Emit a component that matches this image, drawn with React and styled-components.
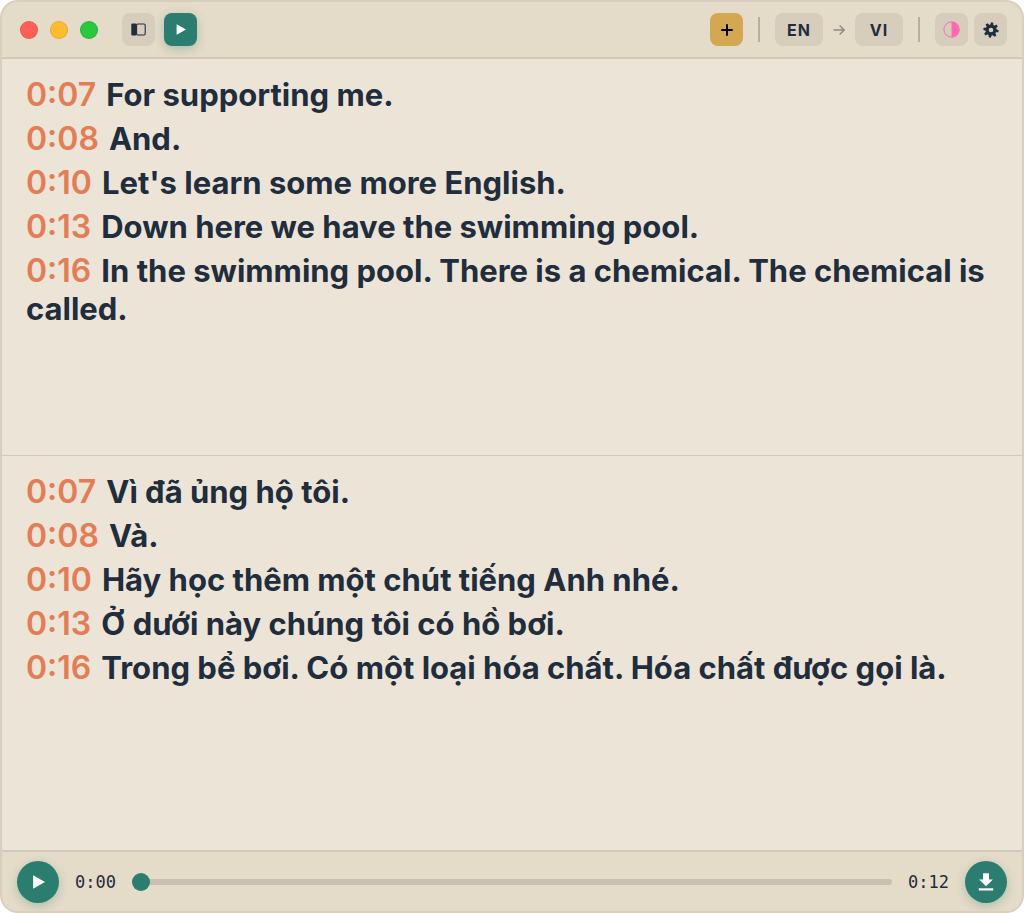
import React, { useState } from 'react';
import styled, { createGlobalStyle, css } from 'styled-components';

const color = {
  ink: '#1f2d3d',
  green: '#2a7d6f',
  amber: '#d4a853',
  coral: '#e27d55',
  bar: '#e4dbc8',
  paper: '#ece4d7',
  chip: '#d6cdbd',
  line: '#d3c9b8',
};

const GlobalStyle = createGlobalStyle`
  *, *::before, *::after { box-sizing: border-box; }
  body { margin: 0; background: #ffffff; }
  button, input { font: inherit; margin: 0; }
`;

const Window = styled.div`
  display: grid;
  grid-template-rows: auto 1fr 1fr auto;
  min-height: 100vh;
  overflow: hidden;
  border: 2px solid #d8cebe;
  border-radius: 18px;
  background: ${color.paper};
  color: ${color.ink};
  font-family: Inter, "Liberation Sans", sans-serif;
`;

const Toolbar = styled.header`
  display: flex;
  align-items: center;
  justify-content: space-between;
  padding: 11px 15px 11px 18px;
  border-bottom: 2px solid ${color.line};
  background: ${color.bar};
`;

const Group = styled.div`
  display: flex;
  align-items: center;
  gap: ${(p) => p.$gap}px;
`;

const TrafficLights = styled(Group)`
  margin-right: 15px;
`;

const Light = styled.button`
  width: 18px;
  height: 18px;
  padding: 0;
  border: 1px solid rgba(0, 0, 0, 0.1);
  border-radius: 50%;
  background: ${(p) => p.$color};
`;

const tones = {
  plain: css`
    background: ${color.chip};
    color: ${color.ink};
  `,
  green: css`
    background: ${color.green};
    color: #ffffff;
    box-shadow: 0 3px 10px rgba(42, 125, 111, 0.3);
  `,
  amber: css`
    background: ${color.amber};
    color: #000000;
  `,
};

const ToolButton = styled.button`
  display: flex;
  align-items: center;
  justify-content: center;
  width: ${(p) => (p.$wide ? 48 : 33)}px;
  height: 33px;
  padding: 0;
  border: 0;
  border-radius: 8px;
  font-size: 16px;
  font-weight: 700;
  letter-spacing: 1px;
  ${(p) => tones[p.$tone || 'plain']}
`;

const Separator = styled.span`
  width: 2px;
  height: 25px;
  background: #b7aea3;
`;

const Panel = styled.section`
  padding: 17px 24px;

  & + & {
    border-top: 1px solid ${color.line};
  }
`;

const Line = styled.p`
  margin: 0 0 6px;
  font-size: 31px;
  line-height: 38px;
  font-weight: 700;
`;

const Stamp = styled.time`
  margin-right: 10px;
  color: ${color.coral};
  font-size: 32px;
  line-height: 32px;
  font-weight: 600;
`;

const Player = styled.footer`
  display: flex;
  align-items: center;
  gap: 16px;
  padding: 9px 15px 8px;
  border-top: 2px solid ${color.line};
  background: ${color.bar};
`;

const RoundButton = styled.button`
  display: flex;
  flex: none;
  align-items: center;
  justify-content: center;
  width: 42px;
  height: 42px;
  padding: 0;
  border: 0;
  border-radius: 50%;
  ${tones.green}
`;

const Clock = styled.span`
  font-family: "DejaVu Sans Mono", monospace;
  font-size: 17px;
  line-height: 20px;
`;

const Seek = styled.input`
  flex: 1;
  min-width: 0;
  height: 18px;
  appearance: none;
  background: transparent;

  &::-webkit-slider-runnable-track {
    height: 6px;
    border-radius: 3px;
    background: #c8c0b0;
  }

  &::-webkit-slider-thumb {
    appearance: none;
    width: 18px;
    height: 18px;
    margin-top: -6px;
    border-radius: 50%;
    background: ${color.green};
  }
`;

const SidebarIcon = () => (
  <svg width="15" height="13" viewBox="0 0 15 13" aria-hidden="true">
    <rect x="0.3" y="0.5" width="5.2" height="12" rx="1" fill="currentColor" />
    <rect x="5.6" y="1" width="8.6" height="11" rx="1.2" fill="none" stroke="currentColor" strokeWidth="1.1" />
  </svg>
);

const PlayIcon = ({ size }) => (
  <svg width={size} height={size} viewBox="0 0 12 12" aria-hidden="true">
    <path d="M1.8 0.3 12 6 1.8 11.7Z" fill="currentColor" />
  </svg>
);

const PlusIcon = () => (
  <svg width="12" height="12" viewBox="0 0 12 12" aria-hidden="true">
    <path d="M6 0.3v11.4M0.3 6h11.4" stroke="currentColor" strokeWidth="2" />
  </svg>
);

const ArrowIcon = () => (
  <svg width="12" height="10" viewBox="0 0 12 10" fill="none" stroke="#8d8b84" strokeWidth="1.4" aria-hidden="true">
    <path d="M0.5 5h10.5M6.6 0.6 11.2 5 6.6 9.4" />
  </svg>
);

const ContrastIcon = () => (
  <svg width="17" height="17" viewBox="0 0 17 17" aria-hidden="true">
    <circle cx="8.5" cy="8.5" r="7.6" fill="none" stroke="#ff69b4" strokeWidth="1" />
    <path d="M8.5 0.4a8.1 8.1 0 0 1 0 16.2Z" fill="#ff69b4" />
  </svg>
);

const GearIcon = () => (
  <svg width="16" height="16" viewBox="-8 -8 16 16" aria-hidden="true">
    <circle r="3.9" fill="none" stroke="currentColor" strokeWidth="3.2" />
    {[10, 55, 100, 145, 190, 235, 280, 325].map((a) => (
      <path key={a} d="M-1.6 -4.6-1.3 -7.6H1L1.6 -4.6Z" transform={`rotate(${a})`} fill="currentColor" />
    ))}
  </svg>
);

const DownloadIcon = () => (
  <svg width="16" height="18" viewBox="0 0 16 18" fill="currentColor" aria-hidden="true">
    <path d="M5 0.3h6v6.2h3.9L8 13.3 1.1 6.5H5Z" />
    <rect x="0.8" y="15.3" width="14.4" height="2.2" />
  </svg>
);

const english = [
  ['0:07', 'For supporting me.'],
  ['0:08', 'And.'],
  ['0:10', "Let's learn some more English."],
  ['0:13', 'Down here we have the swimming pool.'],
  ['0:16', 'In the swimming pool. There is a chemical. The chemical is called.'],
];

const vietnamese = [
  ['0:07', 'Vì đã ủng hộ tôi.'],
  ['0:08', 'Và.'],
  ['0:10', 'Hãy học thêm một chút tiếng Anh nhé.'],
  ['0:13', 'Ở dưới này chúng tôi có hồ bơi.'],
  ['0:16', 'Trong bể bơi. Có một loại hóa chất. Hóa chất được gọi là.'],
];

const Transcript = ({ lang, label, lines }) => (
  <Panel lang={lang} aria-label={label}>
    {lines.map(([time, text]) => (
      <Line key={time}>
        <Stamp>{time}</Stamp>
        {text}
      </Line>
    ))}
  </Panel>
);

export default function App() {
  const [position, setPosition] = useState(0);
  return (
    <>
      <GlobalStyle />
      <Window>
        <Toolbar>
          <Group $gap={9}>
            <TrafficLights $gap={12}>
              <Light $color="#ff5f57" aria-label="Close" />
              <Light $color="#febc2e" aria-label="Minimize" />
              <Light $color="#28c840" aria-label="Zoom" />
            </TrafficLights>
            <ToolButton aria-label="Toggle sidebar"><SidebarIcon /></ToolButton>
            <ToolButton $tone="green" aria-label="Start"><PlayIcon size={11} /></ToolButton>
          </Group>
          <Group $gap={15}>
            <ToolButton $tone="amber" aria-label="Add"><PlusIcon /></ToolButton>
            <Separator />
            <Group $gap={10}>
              <ToolButton $wide>EN</ToolButton>
              <ArrowIcon />
              <ToolButton $wide>VI</ToolButton>
            </Group>
            <Separator />
            <Group $gap={6}>
              <ToolButton aria-label="Theme"><ContrastIcon /></ToolButton>
              <ToolButton aria-label="Settings"><GearIcon /></ToolButton>
            </Group>
          </Group>
        </Toolbar>
        <Transcript lang="en" label="English" lines={english} />
        <Transcript lang="vi" label="Tiếng Việt" lines={vietnamese} />
        <Player>
          <RoundButton aria-label="Play"><PlayIcon size={14} /></RoundButton>
          <Clock>0:00</Clock>
          <Seek
            type="range"
            min="0"
            max="12"
            value={position}
            onChange={(e) => setPosition(Number(e.target.value))}
            aria-label="Position"
          />
          <Clock>0:12</Clock>
          <RoundButton aria-label="Download"><DownloadIcon /></RoundButton>
        </Player>
      </Window>
    </>
  );
}
